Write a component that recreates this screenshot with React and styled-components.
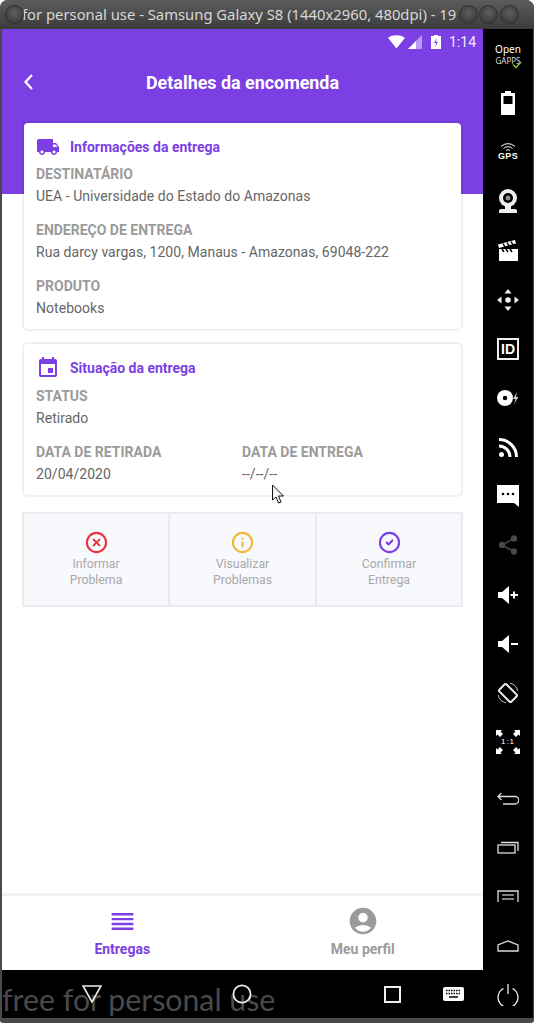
import React from "react";
import styled, { createGlobalStyle } from "styled-components";
import { MdLocalShipping, MdEvent, MdReorder, MdAccountCircle } from "react-icons/md";
import { CircleX, Info, CircleCheck } from "lucide-react";

// ------------ Variables -------------------
const purple = "#7b3fe4";
const labelGrey = "#9b9b9b";
const valueGrey = "#666666";
// ------------------------------------------

const GlobalStyle = createGlobalStyle`
  html, body {
    margin: 0;
    padding: 0;
    background: #fff;
    font-family: Roboto, "Liberation Sans", sans-serif;
  }
  * { box-sizing: border-box; }
`;

const Desktop = styled.div`
  position: relative;
  width: 534px;
  height: 1024px;
  overflow: hidden;
  background: #fff;
`;

const Window = styled.div`
  height: 1023px;
  display: flex;
  flex-direction: column;
  background: #4a4a4a;
  border-radius: 8px 8px 3px 3px;
  overflow: hidden;
`;

const TitleBar = styled.div`
  position: relative;
  height: 29px;
  flex: none;
  padding-left: 22px;
  background: linear-gradient(#5c5c5c, #3c3c3c);
  color: #d8d8d8;
  font: 14.8px/29px "Noto Sans", sans-serif;
  white-space: nowrap;
  overflow: hidden;
`;

const TitleText = styled.div`
  width: 446px;
  overflow: hidden;
`;

const WinButton = styled.span`
  position: absolute;
  top: 5px;
  left: ${(p) => p.$x}px;
  width: 19px;
  height: 19px;
  border-radius: 50%;
  background: radial-gradient(circle at 50% 40%, #5f5f5f, #3f3f3f 70%);
  border: 1px solid #303030;
`;

const Body = styled.div`
  flex: 1;
  display: flex;
  padding: 0 1px 5px 2px;
  min-height: 0;
`;

const Phone = styled.div`
  width: 481px;
  display: flex;
  flex-direction: column;
`;

const Screen = styled.div`
  flex: 1;
  display: flex;
  flex-direction: column;
  background: #fff;
  min-height: 0;
`;

const PurpleTop = styled.div`
  height: 165px;
  flex: none;
  background: ${purple};
  color: #fff;
`;

const StatusBar = styled.div`
  height: 26px;
  display: flex;
  align-items: center;
  justify-content: flex-end;
  gap: 3px;
  padding-right: 7px;
  font-size: 14px;
`;

const StatusTime = styled.span`
  margin-left: 5px;
  color: #f0eafc;
`;

const AppHeader = styled.div`
  position: relative;
  height: 54px;
  display: flex;
  align-items: center;
  justify-content: center;
  font-size: 17.9px;
  font-weight: 700;
`;

const BackButton = styled.svg`
  position: absolute;
  left: 21px;
  top: 18px;
`;

const Content = styled.div`
  flex: 1;
  margin-top: -73px;
  padding: 0 20px;
  display: flex;
  flex-direction: column;
  gap: 11px;
`;

const Card = styled.div`
  border: 2px solid rgba(0, 0, 0, 0.06);
  background: #fff;
  background-clip: padding-box;
  border-radius: 6px;
  padding: 12px 12px 10px;
`;

const CardTitle = styled.div`
  display: flex;
  align-items: center;
  gap: 10px;
  height: 24px;
  margin-bottom: ${(p) => p.$gap}px;
  color: ${purple};
  font-size: 14px;
  font-weight: 700;
  svg { flex: none; }
`;

const Field = styled.div`
  & + & { margin-top: 12px; }
`;

const Label = styled.div`
  height: 22px;
  line-height: 22px;
  font-size: 14px;
  font-weight: 700;
  color: ${labelGrey};
`;

const Value = styled.div`
  height: 22px;
  line-height: 22px;
  font-size: 14px;
  letter-spacing: 0.04px;
  color: ${valueGrey};
  white-space: nowrap;
`;

const TwoColumns = styled.div`
  display: grid;
  grid-template-columns: 206px 1fr;
  margin-top: 12px;
`;

const Actions = styled.div`
  display: grid;
  grid-template-columns: 144px 147px 1fr;
  height: 95px;
  margin-top: 4px;
  background: #f8f9fc;
  border: 2px solid #e9ebef;
`;

const Action = styled.div`
  display: flex;
  flex-direction: column;
  align-items: center;
  padding-top: 17px;
  font-size: 12.3px;
  line-height: 16px;
  color: #a8a8a8;
  text-align: center;
  svg { margin-bottom: 2px; }
  & + & { border-left: 2px solid #e9ebef; }
`;

const TabBar = styled.div`
  height: 77px;
  flex: none;
  display: grid;
  grid-template-columns: 1fr 1fr;
  background: #fff;
  border-top: 3px solid #f2f2f2;
`;

const Tab = styled.div`
  display: flex;
  flex-direction: column;
  align-items: center;
  font-size: 14px;
  font-weight: 700;
  line-height: 18px;
  padding-top: 8px;
  color: ${(p) => (p.$active ? purple : labelGrey)};
`;

const TabIcon = styled.div`
  height: 32px;
  display: flex;
  align-items: center;
  margin-bottom: 3px;
  margin-top: 1px;
`;

const NavBar = styled.div`
  position: relative;
  height: 48px;
  flex: none;
  background: #000;
  display: flex;
  align-items: center;
  padding-left: 80px;
  overflow: hidden;
`;

const NavKey = styled.span`
  display: flex;
  margin-left: ${(p) => p.$gap || 0}px;
  position: relative;
  z-index: 1;
`;

const Watermark = styled.div`
  position: absolute;
  left: 0;
  bottom: -3px;
  font: 30.3px/44px Lato, "Open Sans", sans-serif;
  color: #4a4a4a;
  white-space: nowrap;
`;

const SideBar = styled.div`
  flex: 1;
  background: #000;
  display: flex;
  flex-direction: column;
  align-items: center;
  color: #fff;
`;

const SideItem = styled.div`
  height: 49.2px;
  flex: none;
  display: flex;
  flex-direction: column;
  align-items: center;
  justify-content: center;
  margin-top: ${(p) => p.$gap || 0}px;
`;

const GappsLogo = styled.div`
  position: relative;
  text-align: center;
  margin-top: 3px;
  svg { position: absolute; right: -1px; bottom: -3px; }
`;

const OpenText = styled.div`
  font: 10px/11px "Noto Sans", sans-serif;
`;

const GappsText = styled.div`
  font: 8px/11px "Noto Sans", sans-serif;
  color: #ddd;
`;

const GpsText = styled.div`
  font: 700 9px/9px "Liberation Sans", sans-serif;
  letter-spacing: 0.3px;
`;

const IdBox = styled.div`
  width: 22px;
  height: 22px;
  border: 2px solid #eee;
  font: 700 14px/18px "Liberation Sans", sans-serif;
  text-align: center;
`;

const OneToOne = styled.div`
  position: relative;
  width: 24px;
  height: 24px;
  font: 8px/24px "Liberation Sans", sans-serif;
  text-align: center;
  letter-spacing: 1px;
  svg { position: absolute; left: 0; top: 0; }
`;

const Cursor = styled.svg`
  position: absolute;
  left: 271px;
  top: 484px;
`;

function InfoField({ label, value }) {
  return (
    <div>
      <Label>{label}</Label>
      <Value>{value}</Value>
    </div>
  );
}

const sideIcons = [
  <GappsLogo>
    <OpenText>Open</OpenText>
    <GappsText>GAPPS</GappsText>
    <svg width="10" height="8" viewBox="0 0 10 8" fill="none" stroke="#8bc53f" strokeWidth="1.500"><path d="M1 3.500 4 6.500 9 1" /></svg>
  </GappsLogo>,
  <svg width="14" height="24" viewBox="0 0 14 24"><path fill="#fff" d="M4 0h6v2h3a1 1 0 0 1 1 1v20a1 1 0 0 1-1 1H1a1 1 0 0 1-1-1V3a1 1 0 0 1 1-1h3z" /><rect x="2.500" y="5" width="9" height="8" fill="#000" /></svg>,
  <>
    <svg width="16" height="9" viewBox="0 0 16 9" fill="none" stroke="#fff" strokeWidth="1"><path d="M1 3.500a10 10 0 0 1 14 0M3.500 5.500a6.500 6.500 0 0 1 9 0M6 7.500a3 3 0 0 1 4 0" /></svg>
    <GpsText>GPS</GpsText>
  </>,
  <svg width="18" height="24" viewBox="0 0 18 24"><circle cx="9" cy="9" r="9" fill="#eee" /><circle cx="9" cy="9" r="5" fill="#000" /><circle cx="9" cy="9" r="2.500" fill="#888" /><path fill="#eee" d="M6 17h6v3h4a2 2 0 0 1 2 2v2H0v-2a2 2 0 0 1 2-2h4z" /></svg>,
  <svg width="20" height="21" viewBox="0 0 20 21"><path fill="#fff" d="M1 9h19v12H1z" /><path fill="#fff" d="M0 4.500 17 0l1 3.500L1 8z" /><path stroke="#000" strokeWidth="1.500" d="M5 3.500 7 7M9 2.500l2 3.500M13 1.500l2 3.500M4 9l2 3M8 9l2 3M12 9l2 3" /></svg>,
  <svg width="22" height="22" viewBox="0 0 22 22" fill="#eee"><circle cx="11" cy="11" r="2.800" /><path d="M11 0l3.500 4.500h-7zM11 22l-3.500-4.500h7zM0 11l4.500-3.500v7zM22 11l-4.500 3.500v-7z" /></svg>,
  <IdBox>ID</IdBox>,
  <svg width="22" height="16" viewBox="0 0 22 16"><circle cx="8" cy="8" r="8" fill="#fff" /><circle cx="8" cy="8" r="2.200" fill="#000" /><path fill="#ccc" d="M20 2l-4 7h2.500L17 14l4.500-7H19z" /></svg>,
  <svg width="19" height="19" viewBox="0 0 19 19" fill="none" stroke="#fff" strokeWidth="3"><path d="M0 1.500a17.500 17.500 0 0 1 17.500 17.500M0 8a11 11 0 0 1 11 11" /><circle cx="2.500" cy="16.500" r="2.500" fill="#fff" stroke="none" /></svg>,
  <svg width="22" height="22" viewBox="0 0 22 22"><path fill="#fff" d="M0 0h22v22l-5-4H0z" /><circle cx="6" cy="9" r="1.300" fill="#000" /><circle cx="11" cy="9" r="1.300" fill="#000" /><circle cx="16" cy="9" r="1.300" fill="#000" /></svg>,
  <svg width="18" height="20" viewBox="0 0 18 20" fill="#4a4a4a" stroke="#4a4a4a"><path strokeWidth="1.500" d="M15 3.500 3 10l12 6.500" fill="none" /><circle cx="3" cy="10" r="2.800" /><circle cx="15" cy="3.500" r="2.800" /><circle cx="15" cy="16.500" r="2.800" /></svg>,
  <svg width="20" height="18" viewBox="0 0 20 18" fill="#fff"><path d="M0 6h4l7-6v18l-7-6H0z" /><path d="M15 5.500h2V8h3v2h-3v2.500h-2V10h-2.500V8H15z" /></svg>,
  <svg width="20" height="18" viewBox="0 0 20 18" fill="#fff"><path d="M0 6h4l7-6v18l-7-6H0z" /><path d="M13 8h7v2h-7z" /></svg>,
  <svg width="22" height="22" viewBox="0 0 22 22" fill="none" stroke="#eee"><rect x="6" y="2.500" width="10" height="17" rx="1.500" strokeWidth="2" transform="rotate(-45 11 11)" /><path strokeWidth="0.800" d="M13 1.200A10 10 0 0 1 20.800 9M9 20.800A10 10 0 0 1 1.200 13" /></svg>,
  <OneToOne>
    1:1
    <svg width="24" height="24" viewBox="0 0 24 24" fill="#fff"><path d="M0 0h6L4.500 1.500 7 4 4 7 1.500 4.500 0 6zM24 0v6l-1.500-1.500L20 7l-3-3 2.500-2.500L18 0zM0 24v-6l1.500 1.500L4 17l3 3-2.500 2.500L6 24zM24 24h-6l1.500-1.500L17 20l3-3 2.500 2.500L24 18z" /></svg>
  </OneToOne>,
];

const sideKeys = [
  <svg width="22" height="13" viewBox="0 0 22 13" fill="none" stroke="#ddd" strokeWidth="1.300"><path d="M4.500 1 1 4.500 4.500 8M1 4.500h17a3.500 3.500 0 0 1 0 7.500H6" /></svg>,
  <svg width="22" height="13" viewBox="0 0 22 13" fill="none" stroke="#ddd" strokeWidth="1.300"><rect x="1" y="4" width="17" height="8" /><path d="M4 1.500h17V10" /></svg>,
  <svg width="22" height="13" viewBox="0 0 22 13" fill="none" stroke="#ddd" strokeWidth="1.300"><path d="M1 12V1h20v11" /><path d="M5 5h12M5 9h12" strokeWidth="1.600" stroke="#aaa" /></svg>,
  <svg width="22" height="12" viewBox="0 0 22 12" fill="none" stroke="#ddd" strokeWidth="1.300"><path d="M1 11V5l10-4 10 4v6z" /></svg>,
  <svg width="22" height="22" viewBox="0 0 22 22" fill="none" stroke="#eee" strokeWidth="1.300"><path d="M6.500 4.500a10 10 0 1 0 9 0M11 0v10" /></svg>,
];

export default function App() {
  return (
    <Desktop>
      <GlobalStyle />
      <Window>
        <TitleBar>
          <TitleText>for personal use - Samsung Galaxy S8 (1440x2960, 480dpi) - 19</TitleText>
          <WinButton $x={5} />
          <WinButton $x={459} />
          <WinButton $x={479} />
          <WinButton $x={500} />
        </TitleBar>

        <Body>
          <Phone>
            <Screen>
              <PurpleTop>
                <StatusBar>
                  <svg width="17" height="14" viewBox="0 0 18 14"><path fill="#fff" d="M0 2.500C5-1 13-1 18 2.500L9 14z" /></svg>
                  <svg width="14" height="14" viewBox="0 0 14 14"><path fill="#b79cf0" d="M14 0v14H0z" /><path fill="#fff" d="M8 6v8H0z" /></svg>
                  <svg width="10" height="14" viewBox="0 0 10 14" style={{ marginLeft: 6 }}><path fill="#fff" d="M3 0h4v1h3v13H0V1h3z" /><path fill={purple} d="M6 3 3 8h2l-1 4 3-5H5z" /></svg>
                  <StatusTime>1:14</StatusTime>
                </StatusBar>
                <AppHeader>
                  <BackButton width="11" height="18" viewBox="0 0 11 18" fill="none" stroke="#fff" strokeWidth="2.200">
                    <path d="M9 2 2.500 9 9 16" />
                  </BackButton>
                  Detalhes da encomenda
                </AppHeader>
              </PurpleTop>

              <Content>
                <Card>
                  <CardTitle $gap={4}><MdLocalShipping size={24} />Informações da entrega</CardTitle>
                  <Field><InfoField label="DESTINATÁRIO" value="UEA - Universidade do Estado do Amazonas" /></Field>
                  <Field><InfoField label="ENDEREÇO DE ENTREGA" value="Rua darcy vargas, 1200, Manaus - Amazonas, 69048-222" /></Field>
                  <Field><InfoField label="PRODUTO" value="Notebooks" /></Field>
                </Card>

                <Card>
                  <CardTitle $gap={5}><MdEvent size={24} />Situação da entrega</CardTitle>
                  <InfoField label="STATUS" value="Retirado" />
                  <TwoColumns>
                    <InfoField label="DATA DE RETIRADA" value="20/04/2020" />
                    <InfoField label="DATA DE ENTREGA" value="--/--/--" />
                  </TwoColumns>
                </Card>

                <Actions>
                  <Action>
                    <CircleX size={23} color="#e8343f" strokeWidth={2.2} />
                    Informar<br />Problema
                  </Action>
                  <Action>
                    <Info size={23} color="#efb93c" strokeWidth={2.2} />
                    Visualizar<br />Problemas
                  </Action>
                  <Action>
                    <CircleCheck size={23} color={purple} strokeWidth={2.2} />
                    Confirmar<br />Entrega
                  </Action>
                </Actions>
              </Content>

              <TabBar>
                <Tab $active>
                  <TabIcon><MdReorder size={29} /></TabIcon>
                  Entregas
                </Tab>
                <Tab>
                  <TabIcon><MdAccountCircle size={32} /></TabIcon>
                  Meu perfil
                </Tab>
              </TabBar>
            </Screen>

            <NavBar>
              <Watermark>free for personal use</Watermark>
              <NavKey>
                <svg width="20" height="18" viewBox="0 0 20 18" fill="none" stroke="#eee" strokeWidth="1.600"><path d="M1 1h18L10 17z" /></svg>
              </NavKey>
              <NavKey $gap={130}>
                <svg width="20" height="20" viewBox="0 0 20 20" fill="none" stroke="#eee" strokeWidth="1.800"><circle cx="10" cy="10" r="8.600" /></svg>
              </NavKey>
              <NavKey $gap={132}>
                <svg width="17" height="17" viewBox="0 0 17 17" fill="none" stroke="#eee" strokeWidth="2"><rect x="1" y="1" width="15" height="15" /></svg>
              </NavKey>
              <NavKey $gap={42}>
                <svg width="21" height="14" viewBox="0 0 21 14"><rect width="21" height="14" rx="2" fill="#fff" /><path stroke="#000" strokeWidth="1.500" strokeDasharray="1.500 1" d="M3 3.500h15M3 6.500h15" /><path stroke="#000" strokeWidth="1.500" d="M6 10h9" /></svg>
              </NavKey>
            </NavBar>
          </Phone>

          <SideBar>
            {sideIcons.map((icon, i) => <SideItem key={i}>{icon}</SideItem>)}
            {sideKeys.map((icon, i) => <SideItem key={i} $gap={i === 0 ? 7 : 0}>{icon}</SideItem>)}
          </SideBar>
        </Body>
      </Window>

      <Cursor width="15" height="21" viewBox="0 0 15 21">
        <path d="M1.500 1v15l3.500-3 2.500 6 2.500-1-2.500-6h5z" fill="#f4f4f4" stroke="#111" strokeWidth="1" />
      </Cursor>
    </Desktop>
  );
}
